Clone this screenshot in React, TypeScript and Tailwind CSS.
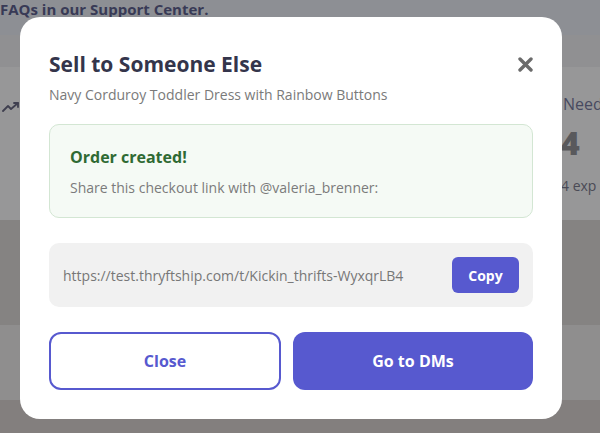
import React from "react";

function TrendIcon() {
  return (
    <svg width="18" height="12" viewBox="0 0 18 12" fill="none" stroke="#3f3f4f" strokeWidth="1.8" strokeLinecap="round" strokeLinejoin="round">
      <path d="M1 10 L6 5 L9 8 L16 2" />
      <path d="M12 2 L16 2 L16 6" />
    </svg>
  );
}

function Backdrop() {
  return (
    <div className="absolute inset-0 flex flex-col bg-[#8c8d91]">
      <div className="h-[35px] bg-[#8d8f94] relative">
        <div className="absolute left-0 top-[-2px] text-[15px] font-bold text-[#383a56] whitespace-nowrap">
          FAQs in our Support Center.
        </div>
      </div>
      <div className="h-[32px] bg-[#909092]" />
      <div className="h-[153px] bg-[#979798] relative">
        <div className="absolute left-[2px] top-[34px]">
          <TrendIcon />
        </div>
        <div className="absolute left-[563px] top-[25px] text-[16px] text-[#484a60] whitespace-nowrap">Need</div>
        <div className="absolute left-[561px] top-[60px] text-[32px] font-black text-[#59595c] leading-none">4</div>
        <div className="absolute left-[561px] top-[108px] text-[14px] text-[#4a4a55] whitespace-nowrap">4 exp</div>
      </div>
      <div className="h-[105px] bg-[#858382]" />
      <div className="h-[75px] bg-[#8f8e8e]" />
      <div className="flex-1 bg-[#837f7e]" />
    </div>
  );
}

export default function App() {
  return (
    <div
      className="relative w-[600px] h-[433px] overflow-hidden"
      style={{ fontFamily: "'Open Sans', 'Noto Sans', sans-serif" }}
    >
      <Backdrop />
      <div className="absolute left-[20px] top-[17px] w-[542px] h-[402px] rounded-[20px] bg-white px-[29px] pt-[33px] pb-[29px] flex flex-col">
        <div className="flex items-center justify-between h-[28px]">
          <h2 className="text-[21px] leading-[28px] font-bold text-[#34354b]">Sell to Someone Else</h2>
          <button className="mr-[-4px] w-[24px] h-[24px] flex items-center justify-center">
            <svg width="15" height="15" viewBox="0 0 15 15" stroke="#6b6b6b" strokeWidth="3.4" strokeLinecap="round">
              <path d="M2 2 L13 13 M13 2 L2 13" />
            </svg>
          </button>
        </div>
        <p className="mt-[7px] text-[14px] leading-[20px] text-[#7a7a7a]">
          Navy Corduroy Toddler Dress with Rainbow Buttons
        </p>
        <div className="mt-[19px] h-[94px] rounded-[10px] border border-[#d3e6d3] bg-[#f5faf5] px-[20px] pt-[20px]">
          <div className="text-[16px] leading-[24px] font-bold text-[#2f6a33]">Order created!</div>
          <div className="mt-[9px] text-[14px] leading-[20px] text-[#7b7b7b]">
            Share this checkout link with @valeria_brenner:
          </div>
        </div>
        <div className="mt-[25px] h-[64px] rounded-[10px] bg-[#f1f1f1] pl-[14px] pr-[14px] flex items-center justify-between">
          <span className="text-[14px] text-[#777777]">https://test.thryftship.com/t/Kickin_thrifts-WyxqrLB4</span>
          <button className="w-[67px] h-[36px] rounded-[6px] bg-[#5759cf] text-white text-[14px] font-bold">
            Copy
          </button>
        </div>
        <div className="mt-[25px] grid grid-cols-[232px_1fr] gap-[12px] h-[58px]">
          <button className="rounded-[12px] border-2 border-[#5759cf] bg-white text-[#5759cf] text-[16px] font-bold">
            Close
          </button>
          <button className="rounded-[12px] bg-[#5759cf] text-white text-[16px] font-bold">Go to DMs</button>
        </div>
      </div>
    </div>
  );
}
